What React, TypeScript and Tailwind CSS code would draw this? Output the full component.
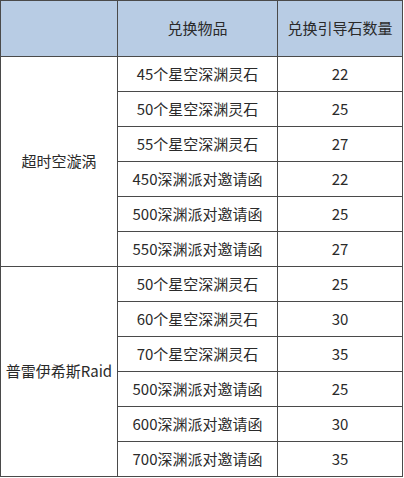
import React from "react";

const groups = [
  {
    name: "超时空漩涡",
    rows: [
      ["45个星空深渊灵石", "22"],
      ["50个星空深渊灵石", "25"],
      ["55个星空深渊灵石", "27"],
      ["450深渊派对邀请函", "22"],
      ["500深渊派对邀请函", "25"],
      ["550深渊派对邀请函", "27"],
    ],
  },
  {
    name: "普雷伊希斯Raid",
    rows: [
      ["50个星空深渊灵石", "25"],
      ["60个星空深渊灵石", "30"],
      ["70个星空深渊灵石", "35"],
      ["500深渊派对邀请函", "25"],
      ["600深渊派对邀请函", "30"],
      ["700深渊派对邀请函", "35"],
    ],
  },
];

export default function App() {
  return (
    <div className="w-[404px] h-[478px] bg-white" style={{ fontFamily: '"Noto Sans CJK SC", "Noto Sans", sans-serif' }}>
      <table className="w-[402px] border-collapse table-fixed text-[15px] text-[#2a2a2a]">
        <colgroup>
          <col className="w-[117px]" />
          <col className="w-[160px]" />
          <col className="w-[125px]" />
        </colgroup>
        <thead>
          <tr className="h-[56px] bg-[#b8cce4]">
            <th className="border border-[#4a4a4a] font-normal"></th>
            <th className="border border-[#4a4a4a] font-normal text-center">兑换物品</th>
            <th className="border border-[#4a4a4a] font-normal text-center">兑换引导石数量</th>
          </tr>
        </thead>
        <tbody>
          {groups.map((g) =>
            g.rows.map((r, i) => (
              <tr key={g.name + i} className="h-[35px]">
                {i === 0 && (
                  <td rowSpan={6} className="border border-[#4a4a4a] text-center align-middle">
                    {g.name}
                  </td>
                )}
                <td className="border border-[#4a4a4a] text-center p-0">{r[0]}</td>
                <td className="border border-[#4a4a4a] text-center p-0">{r[1]}</td>
              </tr>
            ))
          )}
        </tbody>
      </table>
    </div>
  );
}
